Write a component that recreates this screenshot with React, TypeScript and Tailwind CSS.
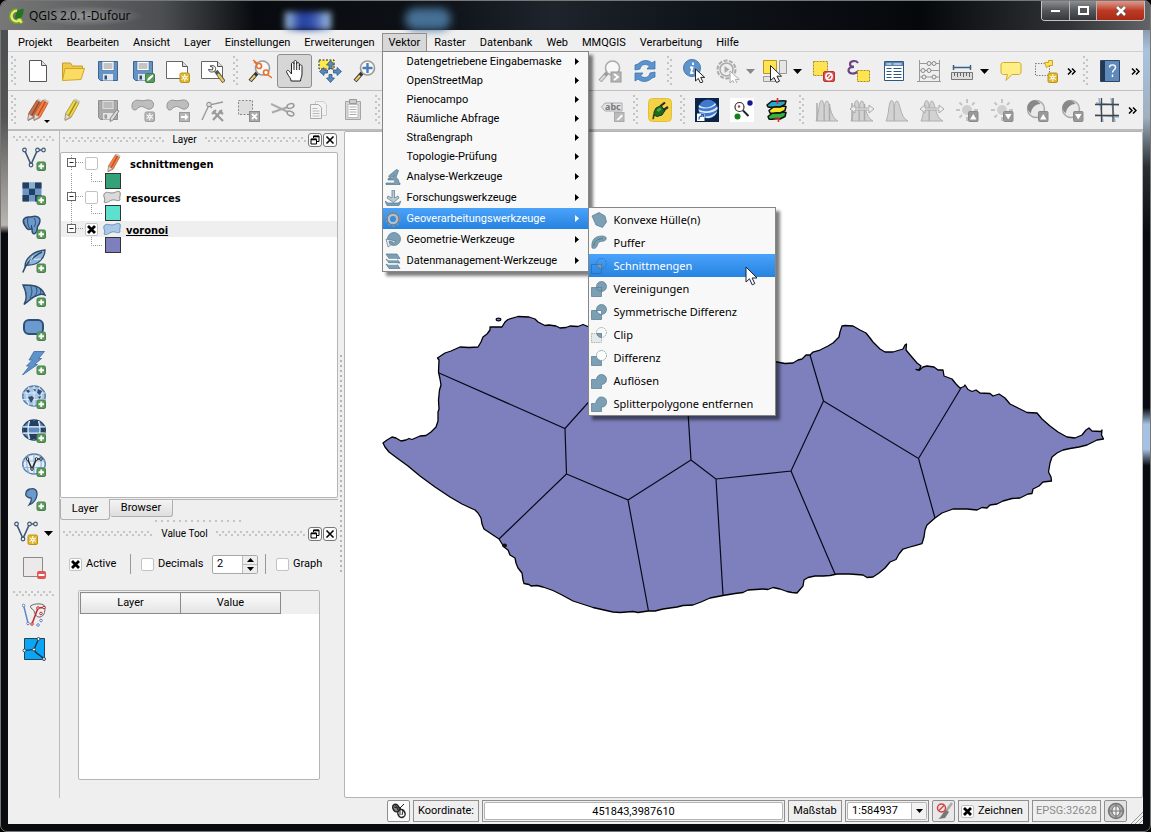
import type { ReactNode } from 'react'

/* ---------- shared drawing pieces ---------- */

function Icon({ children, size = 'size-6' }: { children: ReactNode; size?: string }) {
  return (
    <svg viewBox="0 0 24 24" className={`${size} shrink-0`} fill="none" aria-hidden="true">
      {children}
    </svg>
  )
}

const Plus = () => (
  <g>
    <rect x="15" y="15" width="8.500" height="8.500" rx="1.500" fill="#5b9a5b" stroke="#47804a" />
    <path d="M19.250 16.500v5.500M16.500 19.250H22" stroke="#fff" strokeWidth="1.800" />
  </g>
)

const Star = ({ fill = '#e0b82c', edge = '#b8921a' }: { fill?: string; edge?: string }) => (
  <g>
    <rect x="14" y="14" width="9.500" height="9.500" rx="1.500" fill={fill} stroke={edge} />
    <path d="M18.750 15v7.500M15.500 17l6.500 3.500M22 17l-6.500 3.500" stroke="#fff" strokeWidth="1" />
    <circle cx="18.750" cy="18.750" r="1.700" fill="#fff" />
    <circle cx="18.750" cy="18.750" r=".8" fill={fill} />
  </g>
)

const Caret = ({ color = '#000' }: { color?: string }) => (
  <svg viewBox="0 0 9 5" className="h-[5px] w-[9px] shrink-0" aria-hidden="true">
    <path d="M0 0h9L4.500 5z" fill={color} />
  </svg>
)

const Cursor = ({ x = 0, y = 0, gray = false }: { x?: number; y?: number; gray?: boolean }) => (
  <path
    transform={`translate(${x} ${y})`}
    d="M0 0v12l2.800-2.600 2.200 4.600 2.400-1.200-2.200-4.400h4z"
    fill="#fff"
    stroke={gray ? '#aaa' : '#222'}
    strokeLinejoin="round"
  />
)

const Floppy = ({ gray = false }: { gray?: boolean }) => (
  <g>
    <path d="M2.500 2.500h19v19h-17l-2-2z" fill={gray ? '#aaa' : '#6593c6'} stroke={gray ? '#8f8f8f' : '#3d658f'} />
    <path d="M6 2.500h12v9H6z" fill={gray ? '#ddd' : '#fff'} stroke={gray ? '#999' : '#3d658f'} strokeWidth=".6" />
    <path d="M7.500 5h9M7.500 7h9M7.500 9h9" stroke={gray ? '#999' : '#8a8a8a'} />
    <path d="M7 15h10v6.500H7z" fill={gray ? '#e3e3e3' : '#dfe8f2'} />
    <path d="M8.500 16.500h2.500v4H8.500z" fill={gray ? '#999' : '#2f4d70'} />
  </g>
)

const Lens = ({ gray = false }: { gray?: boolean }) => (
  <g>
    <path d="M9.500 13.500L2 22" stroke={gray ? '#999' : '#333'} strokeWidth="4" />
    <path d="M7 16.500L2.500 21.500" stroke={gray ? '#ddd' : '#f0cf62'} strokeWidth="2" />
    <circle cx="14.500" cy="9" r="7" fill="#f8f8f8" stroke={gray ? '#aaa' : '#9a9a9a'} strokeWidth="1.600" />
  </g>
)

const Blob = () => (
  <path d="M1 8c0-5 4-6.500 8-5.500 4 1 6-1 9.500-.5 5 .7 5.500 7.500 1 9-4 1-5-2.500-9-2.500S6 12.500 3.500 12 1 10 1 8z" fill="#bdbdbd" stroke="#959595" />
)

const PencilShape = ({ x = 0, light, dark }: { x?: number; light: string; dark: string }) => (
  <g transform={`translate(${x} 0)`}>
    <path d="M13 2l5 3-8 14.500-6 3 .6-7z" fill={light} stroke={dark} strokeWidth=".8" />
    <path d="M15.500 3.500L7.500 18" stroke={dark} strokeWidth="1.500" />
    <path d="M4.600 16l5 3-5.600 3z" fill="#ddd" stroke="#888" strokeWidth=".6" />
    <path d="M13 2l1.500-1.500 5 3L18 5z" fill="#c9c9c9" />
  </g>
)

/* ---------- project toolbar icons ---------- */

const NewIcon = () => (
  <Icon>
    <path d="M3.500 1.500h12l5 5v16h-17z" fill="#fff" stroke="#555" />
    <path d="M15.500 1.500v5h5" fill="#ddd" stroke="#555" />
  </Icon>
)
const OpenIcon = () => (
  <Icon>
    <path d="M1.500 21V4h8l2 3h10v3" fill="#efc94a" stroke="#c99d24" />
    <path d="M1.500 21.500L4 9.500h19.500L20 20.500z" fill="#fbdc63" stroke="#d0a52c" />
  </Icon>
)
const SaveIcon = () => <Icon><Floppy /></Icon>
const SaveAsIcon = () => (
  <Icon>
    <Floppy />
    <rect x="14.500" y="14.500" width="9" height="9" rx="1.500" fill="#579a5b" stroke="#3e7d45" />
    <path d="M16 22l1-3 4.500-3.500 1 1.500-4 4z" fill="#fff" />
  </Icon>
)
const Sheet = () => (
  <g>
    <path d="M.5 2.500h16l5 5v12H.5z" fill="#fff" stroke="#666" />
    <path d="M16.500 2.500v5h5" fill="#ddd" stroke="#555" />
  </g>
)
const ComposerIcon = () => <Icon><Sheet /><Star /></Icon>
const ManagerIcon = () => (
  <Icon>
    <Sheet />
    <path d="M15 12l8 11" stroke="#555" strokeWidth="4" />
    <path d="M17 15l5.500 7.500" stroke="#efcb5c" strokeWidth="2.200" />
    <path d="M9 7c4-1.500 7 1 5 5-3 2-6 1-6.500-1.500l4 .5.500-2.500z" fill="#fff" stroke="#444" />
  </Icon>
)
const TouchIcon = () => (
  <Icon>
    <Lens />
    <circle cx="11" cy="7" r="2.500" fill="#fff" stroke="#e8722e" strokeWidth="1.700" />
    <circle cx="18" cy="13.500" r="2.500" fill="#fff" stroke="#e8722e" strokeWidth="1.700" />
    <path d="M5 1l4 3M24 19l-4-3M6 3l3 2" stroke="#e8722e" strokeWidth="1.500" />
  </Icon>
)
const HandIcon = () => (
  <Icon>
    <path
      d="M8 22c0-3-2-4-4-8-1.500-2.500 1-3.500 2.500-1.500L8.500 15V5c0-2 2.500-2 2.500 0V3c0-2 2.700-2 2.700 0v2c0-2 2.600-1.800 2.600 0v2c0-1.800 2.700-1.500 2.700.5V15c0 3-1.500 4-1.500 7z"
      fill="#fff"
      stroke="#222"
      strokeLinejoin="round"
    />
    <path d="M11 5v6M13.700 5v6M16.300 7v4" stroke="#222" />
  </Icon>
)
const PanSelIcon = () => (
  <Icon>
    <path d="M1 1h15v9H1z" fill="#ffe94f" stroke="#222" strokeDasharray="2 1.500" />
    <path
      d="M12.500 1.500l4 4.500h-2.500v3.500h-3V6H8.500zM12.500 23.500l4-4.500h-2.500v-3.500h-3V19H8.500zM1.500 12.500l4.500-4v2.500h3.500v3H6v2.500zM23.500 12.500l-4.500-4v2.500h-3.500v3H19v2.500z"
      fill="#5b8ac1"
      stroke="#2f5580"
      strokeWidth=".8"
    />
  </Icon>
)
const ZoomInIcon = () => (
  <Icon>
    <Lens />
    <path d="M14.500 4v10M9.500 9h10" stroke="#4a7db8" strokeWidth="2.400" />
  </Icon>
)
const ZoomNextIcon = () => (
  <Icon>
    <Lens gray />
    <rect x="13" y="13" width="10" height="10" fill="#b5b5b5" stroke="#999" />
    <path d="M16 15l4 3-4 3" stroke="#fff" strokeWidth="1.800" />
  </Icon>
)
const RefreshIcon = () => (
  <Icon>
    <path d="M2 11V6l3-1c5-5 11-4 14-1l3-2v8h-8l2.500-3C13 4.500 8 5 7 10z" fill="#5b93cf" stroke="#3d74b0" strokeWidth=".8" />
    <path d="M22 13v5l-3 1c-5 5-11 4-14 1l-3 2v-8h8l-2.500 3c3.500 2.500 8.500 2 9.500-3z" fill="#5b93cf" stroke="#3d74b0" strokeWidth=".8" />
  </Icon>
)
const IdentifyIcon = () => (
  <Icon>
    <circle cx="9" cy="9" r="8.500" fill="#5f93cb" stroke="#4577ad" />
    <path d="M10 3.500v2.500M7 8.500h2.500L8 14h2.500" stroke="#fff" strokeWidth="1.800" />
    <Cursor x={12.5} y={10} />
  </Icon>
)
const ActionIcon = () => (
  <Icon>
    <circle cx="10.500" cy="10.500" r="9" stroke="#aaa" strokeWidth="2" strokeDasharray="4 1.600" />
    <circle cx="10.500" cy="10.500" r="6.500" fill="#eee" stroke="#aaa" strokeWidth="1.500" />
    <path d="M8.500 7v7l5-3.500z" fill="#aaa" />
    <Cursor x={14} y={12} gray />
  </Icon>
)
const SelectIcon = () => (
  <Icon>
    <path d="M.5 1.500h13v13H.5z" fill="#ffe350" stroke="#b59a20" />
    <path d="M16.500 1.500h7v13h-7zM.5 17.500h13v5H.5z" fill="#e5e5e5" stroke="#999" />
    <path d="M7.500 6.500v15l3.500-3 2.500 5 3-1.300-2.500-5h4.500z" fill="#fff" stroke="#222" strokeLinejoin="round" />
  </Icon>
)
const DeselectIcon = () => (
  <Icon>
    <path d="M1.500 2.500h14v14h-14z" fill="#ffe350" stroke="#a58b1c" strokeDasharray="2 1" />
    <rect x="11.500" y="12.500" width="11" height="10" rx="1.500" fill="#db4f4f" stroke="#b93535" />
    <circle cx="17" cy="17.500" r="3.200" stroke="#fff" strokeWidth="1.500" />
    <path d="M14.800 19.800l4.400-4.600" stroke="#fff" strokeWidth="1.300" />
  </Icon>
)
const ExpressionIcon = () => (
  <Icon>
    <path d="M11 4c-2-3-8-2.500-8 1 0 2 2 2.800 4 2.800-3 0-5.500 1-5.500 3.500 0 4 7 4.200 9.500 1" stroke="#6b4680" strokeWidth="2.200" />
    <path d="M10.500 11.500h12v11h-12z" fill="#ffe350" stroke="#a58b1c" strokeDasharray="2 1" />
  </Icon>
)
const TableIcon = () => (
  <Icon>
    <path d="M2.500 2.500h19v19h-19z" fill="#fff" stroke="#2f567f" />
    <path d="M3 3h18v4H3z" fill="#5b86b3" />
    <path d="M4.500 9.500h5M11.500 9.500h8M4.500 12.500h5M11.500 12.500h8M4.500 15.500h5M11.500 15.500h8M4.500 18.500h5M11.500 18.500h8" stroke="#2f567f" />
    <path d="M4.500 5h5M11.500 5h8" stroke="#fff" />
  </Icon>
)
const AbacusIcon = () => (
  <Icon>
    <path d="M2.500 1v22M22.500 1v22M2.500 4.500h20M2.500 11.500h20M2.500 18h20M0 22.500h24" stroke="#999" />
    <g fill="#eee" stroke="#888">
      <circle cx="12" cy="4.500" r="2" /><circle cx="17" cy="4.500" r="2" />
      <circle cx="6" cy="11.500" r="2" /><circle cx="12" cy="11.500" r="2" />
      <circle cx="7" cy="18" r="2" /><circle cx="17" cy="18" r="2" />
    </g>
  </Icon>
)
const MeasureIcon = () => (
  <Icon>
    <path d="M3.500 6v5M20.500 6v5M3.500 8.500h17" stroke="#37618d" strokeWidth="1.500" />
    <path d="M1.500 13.500h21v7h-21z" fill="#ddd" stroke="#777" />
    <path d="M4.500 14v3M7.500 14v4M10.500 14v3M13.500 14v4M16.500 14v3M19.500 14v4" stroke="#666" />
  </Icon>
)
const TipIcon = () => (
  <Icon>
    <path d="M4.500 3.500h15c2 0 2.500 1 2.500 2.500v7c0 1.500-1 2.500-2.500 2.500H13L7 21.500l1.500-6h-4C3 15.500 2 14.500 2 13V6c0-1.500 1-2.500 2.500-2.500z" fill="#ffee86" stroke="#cfab2f" />
  </Icon>
)
const AnnotationIcon = () => (
  <Icon>
    <path d="M1.500 4.500h14v12h-14z" stroke="#666" strokeDasharray="1.200 1.500" />
    <path d="M10.500 3.500h4v-2h4v5h-3l-3 2z" fill="#ffe350" stroke="#c9a52c" />
    <Star />
  </Icon>
)
const HelpIcon = () => (
  <Icon>
    <path d="M2.500 1.500h19v21h-19z" fill="#5e89bb" stroke="#2c4566" />
    <path d="M3 2h4v20H3z" fill="#24384f" />
    <path d="M11.500 8.500c0-3.500 6-3.500 6 0 0 2.500-3 2.500-3 5M14.500 15.500V18" stroke="#fff" strokeWidth="1.400" />
  </Icon>
)
const BlankIcon = () => <Icon><g /></Icon>

/* ---------- editing toolbar icons ---------- */

const EditsIcon = () => (
  <Icon>
    <PencilShape x={-2} light="#c66f4b" dark="#8d4b33" />
    <PencilShape x={4} light="#f0804a" dark="#bf4f1b" />
  </Icon>
)
const PencilIcon = () => <Icon><PencilShape light="#ecd94e" dark="#a18b21" /></Icon>
const SaveEditsIcon = () => (
  <Icon>
    <Floppy gray />
    <path d="M23 13l-6 9-3 1.500.5-3.500 6-8z" fill="#ddd" stroke="#888" />
  </Icon>
)
const AddFeatureIcon = () => <Icon><Blob /><Star fill="#b8b8b8" edge="#9b9b9b" /></Icon>
const MoveFeatureIcon = () => (
  <Icon>
    <Blob />
    <rect x="13.500" y="14.500" width="10" height="9" fill="#b5b5b5" stroke="#999" />
    <path d="M15 18h4v-2.500l3.500 3.500-3.500 3.500V20h-4z" fill="#fff" />
  </Icon>
)
const NodeIcon = () => (
  <Icon>
    <path d="M1 22L8 7l14-3M8 7l3 3" stroke="#999" strokeWidth="1.400" />
    <circle cx="8" cy="6.500" r="2.300" fill="#ddd" stroke="#888" />
    <path d="M12 13l10 10M21 12l-9 10M11 16l4-4M18 13l4 3" stroke="#999" strokeWidth="2.200" />
  </Icon>
)
const DeleteSelIcon = () => (
  <Icon>
    <path d="M2.500 2.500h14v14h-14z" fill="#ddd" stroke="#888" strokeDasharray="2 1.500" />
    <rect x="13.500" y="13.500" width="10" height="10" fill="#aaa" stroke="#8b8b8b" />
    <path d="M16 16l5 5M21 16l-5 5" stroke="#fff" strokeWidth="1.800" />
  </Icon>
)
const CutIcon = () => (
  <Icon>
    <path d="M0 6l17 8M1 14.500L17 9" stroke="#aaa" strokeWidth="2" />
    <ellipse cx="19.500" cy="8" rx="3.500" ry="2.200" stroke="#999" strokeWidth="1.500" transform="rotate(-18 19.500 8)" />
    <ellipse cx="19.500" cy="15.500" rx="3.500" ry="2.200" stroke="#999" strokeWidth="1.500" transform="rotate(22 19.500 15.500)" />
  </Icon>
)
const CopyIcon = () => (
  <Icon>
    <path d="M9.500 3.500h8l3 3v11h-11z" fill="#f2f2f2" stroke="#ccc" />
    <path d="M4.500 6.500h8l3 3v11h-11z" fill="#f4f4f4" stroke="#aaa" />
    <path d="M6.500 10.500h5M6.500 13h7M6.500 15.500h7M6.500 18h7" stroke="#bbb" />
  </Icon>
)
const PasteIcon = () => (
  <Icon>
    <path d="M4.500 3.500h15v18h-15z" fill="#d5d5d5" stroke="#a5a5a5" />
    <path d="M7 6.500h10v13H7z" fill="#fff" stroke="#bbb" />
    <path d="M8.500 1.500h7v4h-7z" fill="#ccc" stroke="#999" />
    <path d="M8.500 9h7M8.500 11.500h7M8.500 14h7M8.500 16.500h7" stroke="#aaa" />
  </Icon>
)
const LabelIcon = () => (
  <Icon>
    <path d="M.5 9L4 5h17v8H4z" fill="#e5e5e5" stroke="#aaa" />
    <text x="4" y="12" fontSize="9" fontWeight="bold" fontFamily="Noto Sans, sans-serif" fill="#777">abc</text>
    <rect x="13.500" y="14.500" width="9.500" height="9" fill="#bbb" stroke="#aaa" />
    <path d="M15.500 22l5-5.500 1.500 1.500-5 4.500z" fill="#fff" />
  </Icon>
)
const PlugIcon = () => (
  <Icon>
    <rect x=".5" y=".5" width="23" height="23" rx="4" fill="#f4d246" stroke="#e2bf38" />
    <path d="M4.500 20.500c2 0 0-3 2-4" stroke="#1e4a1e" strokeWidth="1.800" />
    <path d="M6 14l2-4 5-2.500 4 5-3 4.500-5 1.500-3-1.500z" fill="#1e6b23" stroke="#123d14" />
    <path d="M12.500 8l4.500-3.500M15.500 12l4.500-3" stroke="#2a2a2a" strokeWidth="2.200" />
    <path d="M8.500 12l3.500-2.500 1.500 2-3 2.500z" fill="#51a746" />
  </Icon>
)
const EarthIcon = () => (
  <Icon>
    <path d="M0 0h24v24H0z" fill="#0c2547" />
    <circle cx="13" cy="11" r="9.500" fill="#3e78cf" />
    <path d="M4 7c4 4 13 3 16-2l1 1.500C17 11 8 11.500 3.500 9zM3.500 11.500c6 3 14 2 19-3v2.500C18 15.500 10 16 4 13.500zM10 18.500c5 0 9-2 12-5-1.500 4.500-6 7-11 6.500z" fill="#dfeafb" />
    <path d="M2 15.500h7.500V23H2z" fill="#fff" />
    <path d="M4 21.500c0-3 1-3.500 3.500-3.500M6 16.500h2.500V19" stroke="#2a5fae" strokeWidth="1.300" />
  </Icon>
)
const FindIcon = () => (
  <Icon>
    <path d="M0 0h24v24H0z" fill="#fff" />
    <circle cx="9.500" cy="9" r="4.500" stroke="#333" strokeWidth="1.200" />
    <path d="M13 12.500l5.500 5.500" stroke="#222" strokeWidth="2" />
    <circle cx="20" cy="5" r="2.700" fill="#17178d" /><circle cx="7.500" cy="18.500" r="3" fill="#138016" /><circle cx="9" cy="8.500" r="1.200" fill="#b33" />
  </Icon>
)
const LayersIcon = () => (
  <Icon>
    <g stroke="#111" strokeWidth="1.500" strokeLinejoin="round">
      <path d="M3 18.500l5-4c5 1 9-1 13 0l-1 4-5 2.500c-4-1-8 1-11 0z" fill="#2db83c" />
      <path d="M4 12.500l5-4c5 1 8-1 12 0l-1 4-5 2.500c-4-1-7 1-10 0z" fill="#f6e627" />
      <path d="M2 7l5-4c5 1 9-1 14 0l-1 3.500L15 9c-4-1-8 1-12 0z" fill="#2aa6c8" />
    </g>
    <path d="M12.500 0v6M9.500 20h4v4" stroke="#e5262b" strokeWidth="1.600" />
  </Icon>
)
const HistIcon = ({ arrows = false, bars = false }: { arrows?: boolean; bars?: boolean }) => (
  <Icon>
    <path d="M1 23C4 18 3.500 2.500 6.500 2.500S9 10 9.500 23zM9 23c0-14 .5-20 3-20 3 0 3 17 11 20z" fill="#d2d2d2" stroke="#b0b0b0" />
    {bars && <path d="M2 5v18M14.500 6v17" stroke="#aaa" strokeWidth="1.500" />}
    {arrows && <path d="M0 11l5-4v3h14V7l5 4-5 4v-3H5v3z" fill="#ededed" stroke="#aaa" />}
  </Icon>
)
const BadgeArrow = ({ down = false }: { down?: boolean }) => (
  <g>
    <rect x="13.500" y="13.500" width="9.500" height="10" rx="1" fill="#999" stroke="#8a8a8a" />
    <path d={down ? 'M15 16h6.500l-3.200 5.500z' : 'M15 21.500h6.500L18.300 16z'} fill="#fff" />
  </g>
)
const SunIcon = ({ down = false }: { down?: boolean }) => (
  <Icon>
    <circle cx="12" cy="12" r="5" fill="#cfcfcf" />
    <path d="M12 1v4M12 19v4M1 12h4M19 12h4M4.500 4.500l2.500 2.500M17 7l2.500-2.500M4.500 19.500l2.500-2.500" stroke="#c4c4c4" strokeWidth="2" />
    <BadgeArrow down={down} />
  </Icon>
)
const ContrastIcon = ({ down = false }: { down?: boolean }) => (
  <Icon>
    <circle cx="11" cy="11" r="8.500" fill="#e9e9e9" stroke="#aaa" strokeWidth="1.500" />
    <path d="M15.500 6A7 7 0 1 0 6 15.500C6 11 10 6 15.500 6z" fill="#888" />
    <BadgeArrow down={down} />
  </Icon>
)
const GridIcon = () => (
  <Icon>
    <path d="M1 5l23 2M0 17l24 2M4 0l4 24M16 0l4 24" stroke="#8fb0cf" strokeWidth="1.500" />
    <path d="M0 6.500h24M0 17.500h24M6.500 0v24M18 0v24" stroke="#444" strokeWidth="1.300" />
  </Icon>
)

/* ---------- layer (left) toolbar icons ---------- */

const VShape = ({ color = '#3c5876' }: { color?: string }) => (
  <g stroke={color} strokeWidth="1.200">
    <path d="M2.500 3L9 17.500 15.500 3H21" strokeWidth="1.600" />
    <g fill="#eee">
      <circle cx="2.500" cy="3" r="1.800" /><circle cx="9" cy="18" r="1.800" />
      <circle cx="15.500" cy="3" r="1.800" /><circle cx="21.500" cy="3" r="1.800" />
    </g>
  </g>
)
const AddVector = () => <Icon><VShape /><Plus /></Icon>
const AddRaster = () => (
  <Icon>
    <path d="M.5 1.500h19v19H.5z" fill="#6b96c6" />
    <path d="M.5 1.500h6.500v6H.5zM13 1.500h6.500v6H13zM7 7.500h6v6.500H7zM.5 14h6.500v6.500H.5zM13 14h6.500v6.500H13z" fill="#24405f" />
    <path d="M7 1.500h6v6H7z" fill="#89aed6" />
    <Plus />
  </Icon>
)
const AddPostgis = () => (
  <Icon>
    <path d="M2 4c2-3 5-2 7-2 3-1 7-1 8.500 1.500 1 2 0 6-2 8-.5 3 .5 5-2.500 7-3 1-3-2-3-5-2 1-4 2-5 0C2.500 10 0 7 2 4z" fill="#6b99ca" stroke="#2d4b6b" strokeWidth="1.500" />
    <path d="M6 3c-1 4 0 8 1.500 10M12 3c2 3 2 6 0 9M9.500 13v-3" stroke="#2d4b6b" />
    <Plus />
  </Icon>
)
const AddFeather = () => (
  <Icon>
    <path d="M3 17c0-7 8-15 20-16 0 8-7 16-18 15z" fill="#8eb4dc" stroke="#2d4b6b" strokeWidth="1.300" />
    <path d="M.8 23.500C4 14 12 7 20 3" stroke="#2d4b6b" strokeWidth="1.500" />
    <path d="M8 13l3-6M12 10.500l7-.5" stroke="#dce9f6" />
    <Plus />
  </Icon>
)
const AddMssql = () => (
  <Icon>
    <path d="M1 2c9 0 18 0 22 10-4-2-6 0-9 1-4 1-6 4-12 8.500C6 15 4 8 1 2z" fill="#6b99ca" stroke="#2d4b6b" strokeWidth="1.400" />
    <path d="M8 2c3 5 2 9 0 13M13 3c3 4 2 7 0 10M18 5c1 3 1 4 0 6" stroke="#2d4b6b" />
    <Plus />
  </Icon>
)
const AddOracle = () => (
  <Icon>
    <rect x="2" y="3" width="19" height="14" rx="5" fill="#6b9acf" stroke="#2d4f77" strokeWidth="2" />
    <Plus />
  </Icon>
)
const AddOwsBolt = () => (
  <Icon>
    <path d="M12 .5h10.500l-6 7h3l-7 6h3L.5 24l7-9h-3l6-6H7z" fill="#5f92cb" stroke="#4979b0" />
    <Plus />
  </Icon>
)
const Globe = ({ fill, line, stroke }: { fill: string; line: string; stroke: string }) => (
  <g>
    <ellipse cx="12" cy="11" rx="11.300" ry="10" fill={fill} stroke={stroke} strokeWidth="1.400" />
    <path d="M1 8h22M1 14.500h22M12 1v20M7 2c-3 6-3 12 0 18M17 2c3 6 3 12 0 18" stroke={line} strokeWidth="1.200" />
  </g>
)
const AddWms = () => (
  <Icon>
    <Globe fill="#a9c5e4" line="#dbe8f5" stroke="#5580ad" />
    <path d="M4 5.500l2.500-1 1.500 2-2 1.500zM11 4l3 .5-1 2zM16 4l4 2-2 4-3-2zM6 12l4-1 2 2-3 5zM16 12l3-1-1 3z" fill="#2f4d70" />
    <Plus />
  </Icon>
)
const AddWcs = () => (
  <Icon>
    <Globe fill="#5e8cc0" line="#5e8cc0" stroke="#24405f" />
    <path d="M7.500 2h9l1 5h-11zM1.500 8.500h5v5h-5zM17.500 8.500h5v5h-5zM7 14.500h10L15.500 20h-7z" fill="#24405f" />
    <path d="M1 7.800h22M1 14.200h22M7.500 2c-2 6-2 12 0 18M16.500 2c2 6 2 12 0 18" stroke="#e7effa" strokeWidth="1.300" />
    <Plus />
  </Icon>
)
const AddWfs = () => (
  <Icon>
    <Globe fill="#e6eff9" line="#8fb4dc" stroke="#5580ad" />
    <path d="M5.500 6l4.500 10L14.500 6H19" stroke="#222" strokeWidth="1.500" />
    <g fill="#fff" stroke="#222"><circle cx="5.500" cy="6" r="1.300" /><circle cx="10" cy="16" r="1.300" /><circle cx="14.500" cy="6" r="1.300" /><circle cx="19" cy="6" r="1.300" /></g>
    <Plus />
  </Icon>
)
const AddCsv = () => (
  <Icon>
    <path d="M8 2c4-1.500 7.500 1 7 6-.5 4-3 8-8 10 2-3 3-5 2-7-4 0-6-2.500-5-5.500C4.500 3.500 6 2.500 8 2z" fill="#6b99ca" stroke="#2d4f77" strokeWidth="1.300" />
    <Plus />
  </Icon>
)
const NewLayer = () => <Icon><VShape /><Star /></Icon>
const RemoveLayer = () => (
  <Icon>
    <path d="M1.500 1.500h19v19h-19z" fill="#ebe9e9" stroke="#8a8a8a" />
    <rect x="15" y="15" width="9" height="8" rx="2" fill="#e25353" />
    <path d="M16.500 19h6" stroke="#fff" strokeWidth="2" />
  </Icon>
)
const TopologyIcon = () => (
  <Icon>
    <path d="M1.500 2L6 20" stroke="#5a86c0" strokeWidth="1.400" />
    <path d="M8.500 3c4-3 14-3 14.500 1 0 6-1 9-5 10-3 .5-5-2-5.500-5C12 6 8 6 8.500 3z" stroke="#666" />
    <path d="M10 21L16 5l6-.5" stroke="#c5242b" strokeWidth="1.500" />
    <g fill="#fff" stroke="#c5242b"><circle cx="10" cy="21" r="1.300" /><circle cx="16" cy="5" r="1.300" /><circle cx="19" cy="10.500" r="1.300" /><circle cx="22" cy="4.500" r="1.300" /></g>
    <g fill="#fff" stroke="#5a86c0"><circle cx="1.500" cy="2.500" r="1.300" /><circle cx="6" cy="20.500" r="1.300" /><circle cx="16" cy="22" r="1.300" /><circle cx="19" cy="17.500" r="1.300" /></g>
  </Icon>
)
const VoronoiIcon = () => (
  <Icon>
    <path d="M2.500 1.500h20v21h-20z" fill="#0aa5f5" stroke="#245" />
    <path d="M2.500 13.500L12 12.500 16.500 2M12 12.500c2 5 6 5 10 9.500" stroke="#123" strokeWidth="1.200" />
    <g fill="#fff" stroke="#345"><circle cx="2.500" cy="13.500" r="1.500" /><circle cx="12" cy="12.500" r="1.500" /><circle cx="16.500" cy="2" r="1.500" /><circle cx="22" cy="22" r="1.500" /></g>
  </Icon>
)

/* ---------- menu icons ---------- */

const M = ({ children }: { children: ReactNode }) => (
  <svg viewBox="0 0 16 16" className="size-4 shrink-0" fill="#7b9fb5" stroke="#55788c" strokeWidth=".7" aria-hidden="true">{children}</svg>
)
const AnalyseIcon = () => <M><path d="M11.500.5l2 1-2.500 7c2 1 3 3 3 5.500h1v1.500H1V14h8c1-1 1-2 0-3H3V9.500h4l2.500-3L5 9 3.500 7z" /></M>
const ForschungIcon = () => <M><path d="M0 11l3 2h10l3-2-2 4.500H2z" /><path d="M7 0h2.500v8L13 6l1 2-5.500 4.500L2 8l1-2 4 2z" fill="#b9cad4" /></M>
const GearIcon = () => (
  <M>
    <circle cx="8" cy="8" r="6.500" fill="none" stroke="#7f8f9b" strokeWidth="2.500" strokeDasharray="2.600 1.500" />
    <circle cx="8" cy="8" r="4.300" fill="#3b8bdd" stroke="#b4bfc7" strokeWidth="2.500" />
    <circle cx="8" cy="8" r="5.800" fill="none" stroke="#66737e" />
  </M>
)
const GeometrieIcon = () => <M><circle cx="9" cy="7" r="6.500" /><path d="M1 7l10 2-8 6z" fill="#e5ecf0" /><path d="M4 9l4 1-3 2.500z" /></M>
const DatenIcon = () => <M><path d="M1 1h11l3 4.500H4zM1 6h11l3 4H4zM1 11h11l3 4.500H4z" /><path d="M1.500 5l2 1.500h9M1.500 10l2 1h9" fill="none" stroke="#fff" strokeWidth="1.300" /></M>
const HullIcon = () => <M><path d="M1 4l7-3.500 6 3.500 1.500 6-4 5.500L5 13z" /></M>
const BufferIcon = () => <M><path d="M1 13c-1-8 3-12 10-12 5 0 5 3 3 4.500-3 1.500-5 0-7 3-1 3-2 6-6 4.500z" /><path d="M3 11c0-5 3-7 9-7.500" fill="none" stroke="#4a6d57" /></M>
const IntersectIcon = () => (
  <M>
    <path d="M.5 6.500h10v9H.5z" fill="none" stroke="#2b66a8" /><circle cx="10.500" cy="5.500" r="5" fill="none" stroke="#2b66a8" strokeDasharray="1.500 .8" />
    <path d="M6 6.500h4.500v4C8 10 6 9 6 6.500z" />
  </M>
)
const UnionIcon = () => <M><path d="M.5 6.500h10v9H.5z" /><circle cx="10.500" cy="5.500" r="5" /><path d="M6 6.500h4.500v4" fill="none" /></M>
const SymDiffIcon = () => <M><path d="M.5 6.500h10v9H.5z" /><circle cx="10.500" cy="5.500" r="5" /><path d="M6 6.500h4.500v4C8 10 6 9 6 6.500z" fill="#fff" /></M>
const ClipIcon = () => (
  <M>
    <path d="M.5 6.500h10v9H.5z" fill="#e4e9ec" stroke="#999" strokeDasharray="1.500 .8" /><circle cx="10.500" cy="5.500" r="5" fill="none" stroke="#888" strokeDasharray="1.500 .8" />
    <path d="M6 6.500h4.500v4C8 10 6 9 6 6.500z" />
  </M>
)
const DiffIcon = () => <M><path d="M.5 6.500h10v9H.5z" /><circle cx="10.500" cy="5.500" r="5" fill="#fdfdfd" strokeDasharray="1.500 .8" /></M>
const DissolveIcon = () => <M><path d="M.5 6.500h5a5 5 0 1 1 5 5v4H.5z" /></M>
const SliverIcon = () => <M><path d="M.5 7.500h3c2 0 1-2 2.500-3.500a5 5 0 1 1 4.500 7v4.500H.5z" /></M>

/* ---------- controls ---------- */

const dotsV = 'bg-[radial-gradient(circle_at_1px_1px,#c4c4c4_1px,transparent_1.500px),radial-gradient(circle_at_4px_4px,#c4c4c4_1px,transparent_1.500px)] bg-[size:6px_6px]'

const Grip = ({ wide = false }: { wide?: boolean }) => (
  <div className={`flex shrink-0 items-center justify-center self-stretch ${wide ? 'w-[15px]' : 'w-[12px]'}`}>
    <div className={`h-[30px] w-[6px] ${dotsV}`} />
  </div>
)
const GripLine = ({ className = '' }: { className?: string }) => <div className={`h-[6px] ${dotsV} ${className}`} />

type Tool = { label: string; icon: ReactNode; pressed?: boolean; menu?: boolean; corner?: boolean; off?: boolean }

function ToolButton({ label, icon, pressed, menu, corner, off }: Tool) {
  return (
    <button
      aria-label={label}
      aria-pressed={pressed}
      className={`flex h-[34px] shrink-0 items-center justify-center ${menu ? 'w-[47px] gap-[6px]' : 'w-[35px]'} ${
        pressed ? 'rounded-[3px] border border-[#8e8e8e] bg-[#d6d6d6]' : ''
      }`}
    >
      {icon}
      {menu && <Caret color={off ? '#888' : '#000'} />}
      {corner && <span className="-ml-[6px] mt-[22px] flex w-[6px]"><svg viewBox="0 0 6 3" className="h-[3px] w-[6px]" aria-hidden="true"><path d="M0 0h6L3 3z" fill="#000" /></svg></span>}
    </button>
  )
}
const Tools = ({ items }: { items: Tool[] }) => <>{items.map((t) => <ToolButton key={t.label} {...t} />)}</>

const More = ({ label }: { label: string }) => (
  <button aria-label={label} className="flex w-[17px] shrink-0 items-center justify-center">
    <svg viewBox="0 0 9 7" className="h-[7px] w-[9px]" fill="none" stroke="#000" strokeWidth="1.500" aria-hidden="true">
      <path d="M1 .5l3 3-3 3M5 .5l3 3-3 3" />
    </svg>
  </button>
)

const Check = ({ id, checked = false, label }: { id: string; checked?: boolean; label?: string }) => (
  <span className="grid size-[13px] shrink-0">
    <input
      id={id}
      type="checkbox"
      defaultChecked={checked}
      aria-label={label}
      className="peer col-start-1 row-start-1 size-[13px] appearance-none rounded-[2px] border border-[#c3c3c3] bg-white"
    />
    <svg viewBox="0 0 13 13" className="pointer-events-none invisible col-start-1 row-start-1 size-[13px] peer-checked:visible" aria-hidden="true">
      <path d="M3 3l7 7M10 3l-7 7" stroke="#000" strokeWidth="2.800" />
    </svg>
  </span>
)

const DockButtons = ({ name }: { name: string }) => (
  <div className="flex gap-px">
    <button aria-label={`${name} abdocken`} className="flex size-[14px] items-center justify-center rounded-[3px] border border-[#777] bg-[#fafafa]">
      <svg viewBox="0 0 10 10" className="size-[10px]" fill="none" stroke="#000" aria-hidden="true">
        <path d="M3.500 3V1h5.500v5.500H7M1 4h5.500v5H1z" /><path d="M1 4.500h5.500M3.500 1.500H9" strokeWidth="1.500" />
      </svg>
    </button>
    <button aria-label={`${name} schließen`} className="flex size-[14px] items-center justify-center rounded-[3px] border border-[#777] bg-[#fafafa]">
      <svg viewBox="0 0 10 10" className="size-[10px]" stroke="#000" strokeWidth="1.600" aria-hidden="true"><path d="M1.500 1.500l7 7M8.500 1.500l-7 7" /></svg>
    </button>
  </div>
)
const DockTitle = ({ title }: { title: string }) => (
  <div className="flex h-[18px] items-center pl-[3px] pr-px">
    <GripLine className="flex-1" />
    <h2 className="px-2 text-[10px]">{title}</h2>
    <GripLine className="mr-[2px] flex-1" />
    <DockButtons name={title} />
  </div>
)

/* ---------- data ---------- */

const fileTools: Tool[] = [
  { label: 'Neu', icon: <NewIcon /> },
  { label: 'Öffnen', icon: <OpenIcon /> },
  { label: 'Speichern', icon: <SaveIcon /> },
  { label: 'Speichern als', icon: <SaveAsIcon /> },
  { label: 'Neue Druckzusammenstellung', icon: <ComposerIcon /> },
  { label: 'Druckverwaltung', icon: <ManagerIcon /> },
]
const navTools: Tool[] = [
  { label: 'Touch-Zoom', icon: <TouchIcon /> },
  { label: 'Karte verschieben', icon: <HandIcon />, pressed: true },
  { label: 'Zur Auswahl verschieben', icon: <PanSelIcon /> },
  { label: 'Hineinzoomen', icon: <ZoomInIcon /> },
  { label: 'Hinauszoomen', icon: <BlankIcon /> },
  { label: 'Native Auflösung', icon: <BlankIcon /> },
  { label: 'Volle Ausdehnung', icon: <BlankIcon /> },
  { label: 'Zur Auswahl zoomen', icon: <BlankIcon /> },
  { label: 'Auf Layer zoomen', icon: <BlankIcon /> },
  { label: 'Zoom zurück', icon: <BlankIcon /> },
  { label: 'Zoom vor', icon: <ZoomNextIcon /> },
  { label: 'Aktualisieren', icon: <RefreshIcon /> },
]
const attrTools: Tool[] = [
  { label: 'Objekte abfragen', icon: <IdentifyIcon /> },
  { label: 'Objektaktion', icon: <ActionIcon />, menu: true, off: true },
  { label: 'Objekte wählen', icon: <SelectIcon />, menu: true },
  { label: 'Auswahl aufheben', icon: <DeselectIcon /> },
  { label: 'Nach Ausdruck wählen', icon: <ExpressionIcon /> },
  { label: 'Attributtabelle', icon: <TableIcon /> },
  { label: 'Feldrechner', icon: <AbacusIcon /> },
  { label: 'Linie messen', icon: <MeasureIcon />, menu: true },
  { label: 'Kartenhinweise', icon: <TipIcon /> },
  { label: 'Neues Lesezeichen', icon: <AnnotationIcon /> },
]
const editTools: Tool[] = [
  { label: 'Aktuelle Änderungen', icon: <EditsIcon />, corner: true },
  { label: 'Bearbeitung umschalten', icon: <PencilIcon /> },
  { label: 'Layeränderungen speichern', icon: <SaveEditsIcon /> },
  { label: 'Objekt hinzufügen', icon: <AddFeatureIcon /> },
  { label: 'Objekt verschieben', icon: <MoveFeatureIcon /> },
  { label: 'Knotenwerkzeug', icon: <NodeIcon /> },
  { label: 'Ausgewähltes löschen', icon: <DeleteSelIcon /> },
  { label: 'Ausschneiden', icon: <CutIcon /> },
  { label: 'Kopieren', icon: <CopyIcon /> },
  { label: 'Einfügen', icon: <PasteIcon /> },
]
const labelTools: Tool[] = [
  { label: 'Beschriftung', icon: <BlankIcon /> },
  { label: 'Beschriftung anheften', icon: <BlankIcon /> },
  { label: 'Beschriftung zeigen', icon: <BlankIcon /> },
  { label: 'Beschriftung verschieben', icon: <BlankIcon /> },
  { label: 'Beschriftung drehen', icon: <BlankIcon /> },
  { label: 'Beschriftung lösen', icon: <BlankIcon /> },
  { label: 'Beschriftung ändern', icon: <LabelIcon /> },
]
const rasterTools: Tool[] = [
  { label: 'Lokale kumulative Streckung', icon: <HistIcon bars /> },
  { label: 'Kumulative Streckung', icon: <HistIcon arrows bars /> },
  { label: 'Lokale Histogrammstreckung', icon: <HistIcon /> },
  { label: 'Histogrammstreckung', icon: <HistIcon arrows /> },
  { label: 'Helligkeit erhöhen', icon: <SunIcon /> },
  { label: 'Helligkeit verringern', icon: <SunIcon down /> },
  { label: 'Kontrast erhöhen', icon: <ContrastIcon /> },
  { label: 'Kontrast verringern', icon: <ContrastIcon down /> },
  { label: 'Gitter', icon: <GridIcon /> },
]
const layerTools: [string, ReactNode][] = [
  ['Vektorlayer', <AddVector />], ['Rasterlayer', <AddRaster />], ['PostGIS-Layer', <AddPostgis />],
  ['SpatiaLite-Layer', <AddFeather />], ['MSSQL-Layer', <AddMssql />], ['Oracle-Layer', <AddOracle />],
  ['SQL-Anywhere-Layer', <AddOwsBolt />], ['WMS-Layer', <AddWms />], ['WCS-Layer', <AddWcs />],
  ['WFS-Layer', <AddWfs />], ['Textdatei-Layer', <AddCsv />],
]

const vectorMenu: { label: string; icon?: ReactNode; open?: boolean }[] = [
  { label: 'Datengetriebene Eingabemaske' },
  { label: 'OpenStreetMap' },
  { label: 'Pienocampo' },
  { label: 'Räumliche Abfrage' },
  { label: 'Straßengraph' },
  { label: 'Topologie-Prüfung' },
  { label: 'Analyse-Werkzeuge', icon: <AnalyseIcon /> },
  { label: 'Forschungswerkzeuge', icon: <ForschungIcon /> },
  { label: 'Geoverarbeitungswerkzeuge', icon: <GearIcon />, open: true },
  { label: 'Geometrie-Werkzeuge', icon: <GeometrieIcon /> },
  { label: 'Datenmanagement-Werkzeuge', icon: <DatenIcon /> },
]
const geoMenu: [string, ReactNode][] = [
  ['Konvexe Hülle(n)', <HullIcon />],
  ['Puffer', <BufferIcon />],
  ['Schnittmengen', <IntersectIcon />],
  ['Vereinigungen', <UnionIcon />],
  ['Symmetrische Differenz', <SymDiffIcon />],
  ['Clip', <ClipIcon />],
  ['Differenz', <DiffIcon />],
  ['Auflösen', <DissolveIcon />],
  ['Splitterpolygone entfernen', <SliverIcon />],
]
const menus = ['Projekt', 'Bearbeiten', 'Ansicht', 'Layer', 'Einstellungen', 'Erweiterungen', 'Vektor', 'Raster', 'Datenbank', 'Web', 'MMQGIS', 'Verarbeitung', 'Hilfe']

/* ---------- menus ---------- */

function GeoSubmenu() {
  return (
    <div role="menu" className="absolute -top-px left-full z-20 w-[188px] border border-[#868686] bg-[#f8f8f8] font-['Noto_Sans','Open_Sans',sans-serif] text-black shadow-[4px_4px_3px_rgba(0,0,0,0.5)]">
      {geoMenu.map(([label, icon]) => {
        const active = label === 'Schnittmengen'
        return (
          <button
            key={label}
            role="menuitem"
            className={`relative flex h-[23px] w-full items-center gap-[7px] whitespace-nowrap pl-[2px] ${active ? 'bg-linear-to-b from-[#4aa3fb] to-[#2583e0] text-white' : ''}`}
          >
            {icon}
            {label}
            {active && (
              <svg viewBox="0 0 14 20" className="absolute left-[156px] top-[12px] z-30 h-[20px] w-[14px]" aria-hidden="true">
                <path d="M1 1v15l3.500-3.200 2.700 6 2.600-1.200-2.700-5.600H12z" fill="#fff" stroke="#16233a" />
              </svg>
            )}
          </button>
        )
      })}
    </div>
  )
}

function VectorMenu() {
  return (
    <div role="menu" className="absolute -left-px top-full z-10 w-[207px] border border-[#868686] bg-[#f8f8f8] text-black shadow-[4px_4px_3px_rgba(0,0,0,0.5)]">
      {vectorMenu.map(({ label, icon, open }) => (
        <div key={label} className={`relative ${open ? 'bg-linear-to-b from-[#4aa3fb] to-[#2583e0] text-white' : ''}`}>
          <button role="menuitem" aria-haspopup="menu" className={`flex w-full items-center pl-[2px] pr-[9px] ${icon ? 'h-[21px]' : 'h-[19px]'}`}>
            <span className="flex w-[22px] shrink-0">{icon}</span>
            <span className="flex-1 whitespace-nowrap text-left">{label}</span>
            <svg viewBox="0 0 4 7" className="h-[7px] w-[4px]" aria-hidden="true"><path d="M0 0l4 3.500L0 7z" fill="currentColor" /></svg>
          </button>
          {open && <GeoSubmenu />}
        </div>
      ))}
    </div>
  )
}

/* ---------- map ---------- */

const coast =
  'M383 443L387 440 392 437 396 438 401 441 406 440 409 438.500 412 439.500 420 436 426 435.500 431 432 436 427 438 421 438 412 439 409 438.500 400 439.500 390 441 385 440 379 438.500 372 439 360 437.500 358 445 353 451 351 460 347 469 347.500 478 347 481 342 483 337 487 334 490 330 490 327 502 327 505 322 508 319.500 518 316.500 529 317 535 319 538 322 545 325.500 549 325 556 326 560 328 566 327.500 570 326 578 326.500 583 324.500 589 327 640 332 700 350 777 362 785 363.500 793 363 798 360 802 359 806 355 810 355 813 352 820 350 828 346 833 343 839 337 840 332 842 326 845 325.500 853 326 860 330 866 333 870 338 873 342 880 349 885 352 893 352 903 349 905 345 906.500 344 906 350 911 356 917 363 921 366 919 370 916 369.500 919 370.500 923 367 927 366 934 367 938 370 943 370 944 376 952 379 956 384 960 388 964 386.500 965 385 968 389.500 972 391.500 976 390 980 393 990 393.500 993 396 999 394 1005 398 1010 404 1018 408 1027 412.500 1037 413 1042 419 1050 426 1058 432 1067 437 1075 438 1082 435 1086 430 1089 428 1092 431 1101 431.500 1102 430 1101.500 435 1103.500 439 1097 440 1087 445 1079 447 1070 448.500 1063 450 1057 453 1052 457 1050 463 1048.500 472 1051 477 1051.500 481 1043 482 1039 486 1033 489 1032 493.500 1028 494 1020 498 1012 498.500 1003 501 997 504 990 505 987 508 982 507.500 977 510 967 509 953 509 942 513 935 518 927 525 925 530 924 537 922 543.500 915 545.500 910 547 903 549 899 554 896 559.500 890 562 885 568 879 573 873 577 867 577.500 863 575 850 574 837 574 830 575.500 823 576 815 576 808 577.500 804 580 803 586 797 593 792 592.500 787 591.500 780 589 773 587.500 768 589.500 763 589 748 590 743 592.500 735 593.500 723 595.500 710 598 701 602 693 605 683 605.500 677 607 663 609 655 611 648 611 638 612.500 633 611.500 620 612.500 613 612 593 607.500 573 601 562 595 553 590.500 543 587 537 585.500 531 586 529 584.500 524 583.500 523 580 522 573 518 568 516 563 515 558 510 555 508 550 504 547 499 539 493 535 490 533 484 529 482 524 481 518 478 513 475 510 462 504 450 497 435 487 420 476 408 466 397 458 389 452 385 447z'

function MapCanvas() {
  return (
    <svg viewBox="345 132 797 665" role="img" aria-label="Karte" className="h-full w-full">
      <path d={coast} fill="#7d80bd" stroke="#000" strokeWidth="1.300" strokeLinejoin="round" />
      <g fill="none" stroke="#080818" strokeWidth="1.200">
        <path d="M439 373L565 428.500 620 367M565 428.500L566.500 474 499 539M566.500 474L628 500 648.500 611M628 500L691 460 686 380M691 460L716 479 723 595M716 479L791 471 823.500 401 810 355M791 471L835 574M823.500 401L918.500 458.500 961 388M918.500 458.500L935 518" />
        <ellipse cx="498.500" cy="319.500" rx="2.300" ry="1.300" fill="#7d80bd" />
      </g>
      <ellipse cx="504.500" cy="545.500" rx="2.500" ry="2" fill="#111" />
    </svg>
  )
}

/* ---------- layer tree ---------- */

const polygonPath = 'M1 4c2-3 5-1 8-1s6-3 8-1c1 3-1 5 0 8-2 2-5-1-8 0s-6 4-8 2c2-3-1-5 0-8z'

type Layer = { name: string; color: string; checked?: boolean; kind: 'edit' | 'gray' | 'blue'; last?: boolean }
const layers: Layer[] = [
  { name: 'schnittmengen', color: 'bg-[#35a179]', kind: 'edit' },
  { name: 'resources', color: 'bg-[#5ce1cc]', kind: 'gray' },
  { name: 'voronoi', color: 'bg-[#7d80bd]', kind: 'blue', checked: true, last: true },
]

function LayerRow({ name, color, checked, kind, last }: Layer) {
  return (
    <li>
      <div className={`flex items-center pl-[5px] ${kind === 'edit' ? 'h-[20px]' : 'h-[16px]'} ${last ? 'bg-[#efefef]' : ''}`}>
        <svg viewBox="0 0 19 16" className="h-4 w-[19px] shrink-0" fill="none" aria-hidden="true">
          <path d={last ? 'M5.500 0v7' : 'M5.500 0v16'} stroke="#999" strokeDasharray="1 1" />
          <path d="M10 7.500h7" stroke="#999" strokeDasharray="1 1" />
          <rect x="1.500" y="3.500" width="8" height="8" fill="#fff" stroke="#666" />
          <path d="M3.500 7.500h4" stroke="#222" />
        </svg>
        <Check id={`layer-${name}`} checked={checked} label={name} />
        {kind === 'edit' ? (
          <span className="ml-[5px] mr-[7px] flex"><Icon size="size-5"><PencilShape x={2} light="#f0804a" dark="#bf4f1b" /></Icon></span>
        ) : (
          <svg viewBox="0 0 18 14" className="ml-[5px] mr-[5px] h-[14px] w-[18px] shrink-0" aria-hidden="true">
            <path d={polygonPath} fill={kind === 'gray' ? '#d9d9d9' : '#a9c8e8'} stroke={kind === 'gray' ? '#8b8b8b' : '#6f95bd'} />
          </svg>
        )}
        <span className={`pt-[3px] font-['DejaVu_Sans_Condensed','DejaVu_Sans',sans-serif] font-bold ${last ? 'underline' : ''}`}>{name}</span>
      </div>
      <div className="flex h-4 items-center pl-[5px]">
        <svg viewBox="0 0 39 16" className="h-4 w-[39px] shrink-0" fill="none" stroke="#999" strokeDasharray="1 1" aria-hidden="true">
          {!last && <path d="M5.500 0v16" />}
          <path d="M25.500 0v8.500H36" />
        </svg>
        <span className={`size-4 border border-[#333] ${color}`} />
      </div>
    </li>
  )
}

/* ---------- window ---------- */

const statusBox = 'flex h-[22px] shrink-0 items-center border border-[#8f8f8f]'

export default function App() {
  return (
    <div className="flex h-screen flex-col overflow-hidden bg-black font-['Roboto','Noto_Sans',sans-serif] text-[11px] leading-[14px] text-black">
      <div className="flex min-h-0 flex-1 flex-col rounded-[7px] border border-[#777] bg-[#080b0f] bg-[linear-gradient(180deg,#4a4c4f_0,#555_14%,#b9b5b1_27%,#080b0f_28%,#080b0f_100%),linear-gradient(180deg,#626468_0,#a9c3df_6%,#9fb0c0_14%,#2a2e33_20%,#080b0f_28%,#080b0f_49%,#a5c2e4_51%,#a5c2e4_54%,#080b0f_56%,#080b0f_100%)] bg-[size:50%_100%] bg-[position:left,right] bg-no-repeat">
        <header className="flex h-[29px] shrink-0 items-start rounded-t-[6px] bg-[linear-gradient(90deg,#777_0,#4c4f52_14%,#080c10_22%,#0e1218_38%,#1f242c_48%,#10151b_60%,#05080b_80%,#303437_93%,#626468_100%)]">
          <div className="flex h-full w-[280px] items-center gap-[4px] pl-[8px]">
            <Icon size="size-4">
              <path d="M12 3a9 9 0 1 0 5 16l3 4" stroke="#6fa02a" strokeWidth="6" />
              <path d="M12 4a8 8 0 1 0 6 13M13 15l6 7" stroke="#e6ee63" strokeWidth="3.500" />
              <path d="M9 16C9 7 14 1 22 1c0 9-2 14-9 15z" fill="#25751f" />
            </Icon>
            <h1 className="bg-[radial-gradient(ellipse_at_center,rgba(190,190,190,0.55),transparent_72%)] pr-3 font-['Open_Sans','Noto_Sans',sans-serif] text-[12px] leading-[20px]">QGIS 2.0.1-Dufour</h1>
          </div>
          <div className="flex h-full flex-1 items-end">
            <div className="ml-[4px] h-[18px] w-[46px] bg-[linear-gradient(90deg,#a3c2e2,#2440a0_35%,#3450ae_60%,#a3c2e2)] blur-[3px]" />
            <div className="ml-[74px] h-[22px] w-[46px] rounded-full bg-[#467096] blur-[4px]" />
          </div>
          <div className="mr-[5px] flex h-[20px] overflow-hidden rounded-b-[4px] border border-t-0 border-[#c4c4c4]">
            <button aria-label="Minimieren" className="flex w-[28px] items-center justify-center border-r border-[#b5b5b5] bg-linear-to-b from-[#8c9094] via-[#53575b] via-50% to-[#35383b]">
              <span className="h-[4px] w-[11px] border border-[#555] bg-white" />
            </button>
            <button aria-label="Maximieren" className="flex w-[27px] items-center justify-center border-r border-[#b5b5b5] bg-linear-to-b from-[#8c9094] via-[#53575b] via-50% to-[#35383b]">
              <span className="h-[9px] w-[11px] border-2 border-white bg-[#555]" />
            </button>
            <button aria-label="Schließen" className="flex w-[47px] items-center justify-center bg-linear-to-b from-[#dc9a8d] via-[#bd3a25] via-50% to-[#a82a15]">
              <svg viewBox="0 0 12 10" className="h-[10px] w-[12px]" aria-hidden="true">
                <path d="M2 1l8 8M10 1L2 9" stroke="#555" strokeWidth="4" /><path d="M2 1l8 8M10 1L2 9" stroke="#fff" strokeWidth="2.500" />
              </svg>
            </button>
          </div>
        </header>

        <div className="mx-[7px] mb-[7px] flex min-h-0 flex-1 flex-col bg-[#efefef]">
          {/* menu bar */}
          <nav className="flex h-[22px] shrink-0 items-end border-b border-[#cfcfcf] pl-[3px]" aria-label="Hauptmenü">
            {menus.map((m) => (
              <div key={m} className={`relative -mb-px flex h-[19px] items-center border px-[6px] ${m === 'Vektor' ? 'border-[#8e8e8e] bg-[#d8d8d8]' : 'border-transparent'}`}>
                <button>{m}</button>
                {m === 'Vektor' && <VectorMenu />}
              </div>
            ))}
          </nav>

          {/* toolbars */}
          <div className="flex h-[39px] shrink-0 items-center border-b border-[#c0c0c0]">
            <Grip />
            <Tools items={fileTools} />
            <Grip />
            <Tools items={navTools} />
            <Grip wide />
            <Tools items={attrTools} />
            <More label="Weitere Attributwerkzeuge" />
            <Grip />
            <Tools items={[{ label: 'Hilfe', icon: <HelpIcon /> }]} />
            <More label="Weitere Hilfen" />
          </div>
          <div className="flex h-[40px] shrink-0 items-center border-b-2 border-[#bcbcbc]">
            <Grip />
            <Tools items={editTools} />
            <Grip wide />
            <Tools items={labelTools} />
            <Grip />
            <Tools items={[{ label: 'Erweiterung', icon: <PlugIcon /> }]} />
            <Grip />
            <Tools items={[{ label: 'Google Earth', icon: <EarthIcon /> }, { label: 'Suchen', icon: <FindIcon /> }, { label: 'OpenLayers', icon: <LayersIcon /> }]} />
            <Grip wide />
            <Tools items={rasterTools} />
            <More label="Weitere Rasterwerkzeuge" />
          </div>

          <div className="flex min-h-0 flex-1">
            {/* layer toolbar */}
            <aside className="flex w-[52px] shrink-0 flex-col items-center border-r border-[#bcbcbc] pt-[5px]">
              <GripLine className="w-[42px] shrink-0" />
              {layerTools.map(([label, icon]) => (
                <button key={label} aria-label={`${label} hinzufügen`} className="flex h-[34px] w-[35px] shrink-0 items-center justify-center">{icon}</button>
              ))}
              <button aria-label="Neuer Layer" className="flex h-[34px] w-[47px] shrink-0 items-center justify-center gap-[6px]"><NewLayer /><Caret /></button>
              <button aria-label="Layer entfernen" className="flex h-[36px] w-[35px] shrink-0 items-center justify-center"><RemoveLayer /></button>
              <GripLine className="mb-[1px] mt-[5px] w-[42px] shrink-0" />
              <button aria-label="Topologie" className="flex h-[34px] w-[35px] shrink-0 items-center justify-center"><TopologyIcon /></button>
              <button aria-label="Voronoi" className="flex h-[34px] w-[35px] shrink-0 items-center justify-center"><VoronoiIcon /></button>
            </aside>

            {/* docks */}
            <div className="flex w-[278px] shrink-0 flex-col">
              <div className="pb-[3px]"><DockTitle title="Layer" /></div>
              <div className="min-h-0 flex-1 rounded-[2px] border border-[#b5b5b5] bg-white">
                <ul>{layers.map((l) => <LayerRow key={l.name} {...l} />)}</ul>
              </div>
              <div role="tablist" className="mt-px flex items-start border-t border-[#b5b5b5]">
                <button role="tab" aria-selected="true" className="-mt-px h-[21px] w-[50px] rounded-b-[3px] border border-t-0 border-[#b0b0b0] bg-[#efefef]">Layer</button>
                <button role="tab" aria-selected="false" className="h-[17px] w-[63px] rounded-b-[3px] border border-t-0 border-l-0 border-[#b0b0b0] bg-linear-to-b from-[#f4f4f4] to-[#dedede]">Browser</button>
              </div>
              <div className={`mx-auto h-[3px] w-[88px] ${dotsV}`} />
              <div className="pt-[2px]"><DockTitle title="Value Tool" /></div>
              <div className="flex h-[42px] items-center pl-[9px]">
                <Check id="active" checked /><label htmlFor="active" className="ml-[4px] w-[30px]">Active</label>
                <span className="ml-[14px] mr-[10px] h-[20px] border-l border-[#999]" />
                <Check id="decimals" /><label htmlFor="decimals" className="ml-[4px] w-[42px]">Decimals</label>
                <div className="ml-[12px] flex h-[19px] w-[46px] rounded-[2px] border border-[#a8a8a8] bg-white">
                  <input aria-label="Decimals" defaultValue="2" className="w-[29px] pl-[4px] outline-none" />
                  <div className="flex flex-1 flex-col border-l border-[#bbb] bg-[#ededed]">
                    <button aria-label="Mehr" className="flex flex-1 items-center justify-center border-b border-[#bbb]"><svg viewBox="0 0 7 4" className="h-1 w-[7px]" aria-hidden="true"><path d="M0 4h7L3.500 0z" /></svg></button>
                    <button aria-label="Weniger" className="flex flex-1 items-center justify-center"><svg viewBox="0 0 7 4" className="h-1 w-[7px]" aria-hidden="true"><path d="M0 0h7L3.500 4z" /></svg></button>
                  </div>
                </div>
                <span className="ml-[7px] mr-[10px] h-[20px] border-l border-[#999]" />
                <Check id="graph" /><label htmlFor="graph" className="ml-[4px]">Graph</label>
              </div>
              <div className="mx-[18px] mb-[18px] mt-[5px] h-[190px] rounded-[2px] border border-[#b5b5b5] bg-white">
                <div className="bg-[#efefef] pl-px pt-px">
                  <table className="border-collapse">
                    <thead>
                      <tr>
                        {['Layer', 'Value'].map((h) => (
                          <th key={h} className="h-[21px] w-[100px] border border-[#8b8b8b] bg-linear-to-b from-[#fcfcfc] to-[#e3e3e3] p-0 font-normal">{h}</th>
                        ))}
                      </tr>
                    </thead>
                  </table>
                </div>
              </div>
            </div>

            <div className="flex w-[6px] shrink-0 items-center justify-center">
              <div className="h-[220px] w-[3px] bg-[radial-gradient(circle_at_1px_1px,#b5b5b5_1px,transparent_1.500px)] bg-[size:5px_5px]" />
            </div>

            <main className="min-w-0 flex-1 rounded-[2px] border border-[#b5b5b5] bg-white"><MapCanvas /></main>
          </div>

          {/* status bar */}
          <footer className="flex h-[26px] shrink-0 items-center justify-end gap-[3px]">
            <button aria-label="Ausdehnung umschalten" className={`${statusBox} w-[23px] justify-center rounded-[2px] bg-[#fafafa]`}>
              <svg viewBox="0 0 16 16" className="size-4" fill="none" stroke="#222" aria-hidden="true">
                <ellipse cx="5" cy="5" rx="3" ry="4" transform="rotate(-30 5 5)" fill="#888" strokeWidth="1.500" /><ellipse cx="10.500" cy="10.500" rx="3.500" ry="4" transform="rotate(-30 10.500 10.500)" strokeWidth="1.500" />
                <path d="M3 4l4 1M8 4l4 4M13 1l-4 4M4 1l3 6M9 8v4M12 8l-1 4" />
              </svg>
            </button>
            <label htmlFor="coord" className={`${statusBox} w-[66px] justify-center`}>Koordinate:</label>
            <div className={`${statusBox} w-[303px] p-px`}>
              <input id="coord" defaultValue="451843,3987610" className="h-full w-full rounded-[2px] border border-[#b5b5b5] bg-white text-center outline-none" />
            </div>
            <label htmlFor="scale" className={`${statusBox} w-[54px] justify-center`}>Maßstab</label>
            <div className={`${statusBox} relative w-[84px] p-px`}>
              <select id="scale" className="h-full w-full appearance-none rounded-[2px] border border-[#b5b5b5] bg-white pl-[4px] outline-none"><option>1:584937</option></select>
              <span className="pointer-events-none absolute inset-y-[2px] right-[2px] flex w-[15px] items-center justify-center border-l border-[#bbb] bg-[#f2f2f2]">
                <svg viewBox="0 0 7 4" className="h-1 w-[7px]" aria-hidden="true"><path d="M0 0h7L3.500 4z" /></svg>
              </span>
            </div>
            <button aria-label="Zeichnen anhalten" className={`${statusBox} w-[23px] justify-center rounded-[2px] bg-[#e8e8e8]`}>
              <svg viewBox="0 0 18 18" className="size-[18px]" fill="none" aria-hidden="true">
                <path d="M17 1L9 12" stroke="#aaa" strokeWidth="2.500" /><path d="M11 8l3 2-4 6-7 1c3-1 4-6 8-9z" fill="#777" />
                <circle cx="6.500" cy="6" r="4" stroke="#d84141" strokeWidth="1.500" /><path d="M3.700 8.800l5.600-5.600" stroke="#d84141" strokeWidth="1.300" />
              </svg>
            </button>
            <span className={`${statusBox} w-[71px] gap-[4px] pl-[2px]`}><Check id="render" checked /><label htmlFor="render">Zeichnen</label></span>
            <span className={`${statusBox} w-[69px] justify-center text-[#8a8a8a]`}>EPSG:32628</span>
            <button aria-label="KBS-Status" className={`${statusBox} w-[23px] justify-center rounded-[2px] bg-[#e3e3e3]`}>
              <svg viewBox="0 0 18 18" className="size-[18px]" fill="none" stroke="#777" aria-hidden="true">
                <circle cx="9" cy="9" r="7.500" fill="#aaa" strokeWidth="1.500" /><ellipse cx="9" cy="9" rx="4" ry="5" fill="#eee" /><path d="M1 9h16M9 1v16" />
              </svg>
            </button>
            <svg viewBox="0 0 12 12" className="ml-px size-3 self-end" stroke="#999" aria-hidden="true"><path d="M0 12L12 0M4 12l8-8M8 12l4-4" /></svg>
          </footer>
        </div>
      </div>
    </div>
  )
}
